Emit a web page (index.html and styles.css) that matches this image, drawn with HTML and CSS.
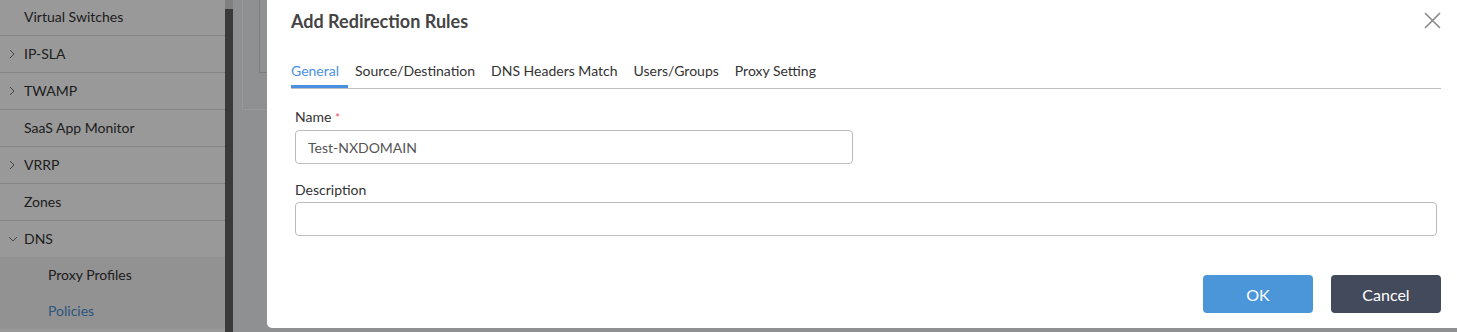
FILE: index.html
```html
<!DOCTYPE html>
<html lang="en">
<head>
    <meta charset="UTF-8">
    <title>Add Redirection Rules</title>
    <link rel="stylesheet" href="styles.css">
</head>
<body>
    <div class="app">
        <aside class="sidenav">
            <div class="nav-item">Virtual Switches</div>
            <div class="nav-item">
                <svg class="chev" width="8" height="10" viewBox="0 0 8 10"><polyline points="2,1 6,5 2,9" /></svg>
                IP-SLA
            </div>
            <div class="nav-item">
                <svg class="chev" width="8" height="10" viewBox="0 0 8 10"><polyline points="2,1 6,5 2,9" /></svg>
                TWAMP
            </div>
            <div class="nav-item">SaaS App Monitor</div>
            <div class="nav-item">
                <svg class="chev" width="8" height="10" viewBox="0 0 8 10"><polyline points="2,1 6,5 2,9" /></svg>
                VRRP
            </div>
            <div class="nav-item">Zones</div>
            <div class="nav-item open">
                <svg class="chev" width="10" height="10" viewBox="0 0 10 10"><polyline points="1,3 5,7 9,3" /></svg>
                DNS
            </div>
            <div class="nav-sub">
                <div class="sub-item">Proxy Profiles</div>
                <div class="sub-item active">Policies</div>
            </div>
        </aside>
        <div class="scrollbar"><div class="thumb"></div></div>
        <main class="content">
            <div class="panel">
                <div class="panel-inner"></div>
            </div>
        </main>
    </div>

    <div class="backdrop"></div>

    <div class="modal">
        <h2 class="modal-title">Add Redirection Rules</h2>
        <button class="close-btn" aria-label="Close">
            <svg width="17" height="17" viewBox="0 0 17 17"><path d="M1 1 L16 16 M16 1 L1 16" /></svg>
        </button>

        <div class="tabs">
            <div class="tab active">General</div>
            <div class="tab">Source/Destination</div>
            <div class="tab">DNS Headers Match</div>
            <div class="tab">Users/Groups</div>
            <div class="tab">Proxy Setting</div>
        </div>

        <form class="form">
            <label class="field-label">Name <span class="req">*</span></label>
            <input type="text" class="field name-field" value="Test-NXDOMAIN">
            <label class="field-label desc-label">Description</label>
            <input type="text" class="field">
        </form>

        <div class="actions">
            <button class="btn btn-ok">OK</button>
            <button class="btn btn-cancel">Cancel</button>
        </div>
    </div>
</body>
</html>
```

FILE: styles.css
```css
* {
    margin: 0;
    padding: 0;
    box-sizing: border-box;
    font-family: Lato, "Open Sans", Arial, sans-serif;
}

body {
    width: 1457px;
    height: 332px;
    overflow: hidden;
    background-color: #edf0f3;
}

.app {
    display: flex;
    height: 332px;
}

/* sidebar */
.sidenav {
    width: 225px;
    background-color: #fff;
    margin-top: -1px;
}

.nav-item {
    position: relative;
    height: 37px;
    line-height: 36px;
    padding-left: 24px;
    font-size: 14px;
    color: #333;
    border-bottom: 1px solid #dcdcdc;
}

.nav-item.open {
    border-bottom: none;
    height: 36px;
}

.chev {
    position: absolute;
    left: 8px;
    top: 13px;
    fill: none;
    stroke: #777;
    stroke-width: 1;
}

.nav-sub {
    background-color: #f4f4f4;
}

.sub-item {
    height: 36px;
    line-height: 36px;
    padding-left: 48px;
    font-size: 14px;
    color: #333;
}

.sub-item.active {
    color: #4a8fd0;
}

.scrollbar {
    width: 8px;
    background-color: #d6d6d6;
}

.scrollbar .thumb {
    margin-top: 9px;
    height: 330px;
    background-color: #626262;
}

/* page behind the dialog */
.content {
    flex: 1;
    padding-left: 9px;
}

.panel {
    height: 110px;
    border-left: 1px solid #fff;
    border-bottom: 1px solid #fff;
    padding-left: 16px;
}

.panel-inner {
    height: 73px;
    border-left: 1px solid #d0d0d0;
    border-bottom: 1px solid #d0d0d0;
}

.backdrop {
    position: fixed;
    top: 0;
    left: 0;
    right: 0;
    bottom: 0;
    background: rgba(0, 0, 0, 0.4);
}

/* dialog */
.modal {
    position: fixed;
    top: -10px;
    left: 267px;
    right: -10px;
    bottom: 4px;
    background: #fff;
    border-radius: 5px;
    padding: 18px 26px 0 24px;
}

.modal-title {
    font-size: 18px;
    font-weight: 700;
    line-height: 26px;
    color: #444;
}

.close-btn {
    position: absolute;
    top: 22px;
    right: 26px;
    width: 17px;
    height: 17px;
    background: none;
    border: none;
    cursor: pointer;
}

.close-btn svg {
    display: block;
    stroke: #8a8a8a;
    stroke-width: 1.6;
}

.tabs {
    display: flex;
    margin-top: 27px;
    border-bottom: 1px solid #bdbdbd;
}

.tab {
    font-size: 14px;
    line-height: 20px;
    color: #333;
    padding: 0 9px 4px 0;
    margin-right: 7px;
    border-bottom: 3px solid transparent;
    cursor: pointer;
}

.tab.active {
    color: #4a90e2;
    border-bottom-color: #4a90e2;
}

.form {
    display: flex;
    flex-direction: column;
    padding: 18px 4px 0 4px;
}

.field-label {
    font-size: 14px;
    line-height: 20px;
    color: #333;
    margin-bottom: 2px;
}

.desc-label {
    margin-top: 16px;
}

.req {
    color: #e8555c;
    font-size: 12px;
}

.field {
    height: 34px;
    border: 1px solid #bbb;
    border-radius: 4px;
    padding: 0 12px;
    font-size: 14px;
    color: #555;
    outline: none;
}

.name-field {
    width: 558px;
}

.actions {
    display: flex;
    justify-content: flex-end;
    gap: 18px;
    margin-top: 39px;
}

.btn {
    width: 110px;
    height: 38px;
    border: none;
    border-radius: 4px;
    color: #fff;
    font-size: 16px;
    cursor: pointer;
}

.btn-ok {
    background-color: #4a96d9;
}

.btn-cancel {
    background-color: #434a5c;
}
```
